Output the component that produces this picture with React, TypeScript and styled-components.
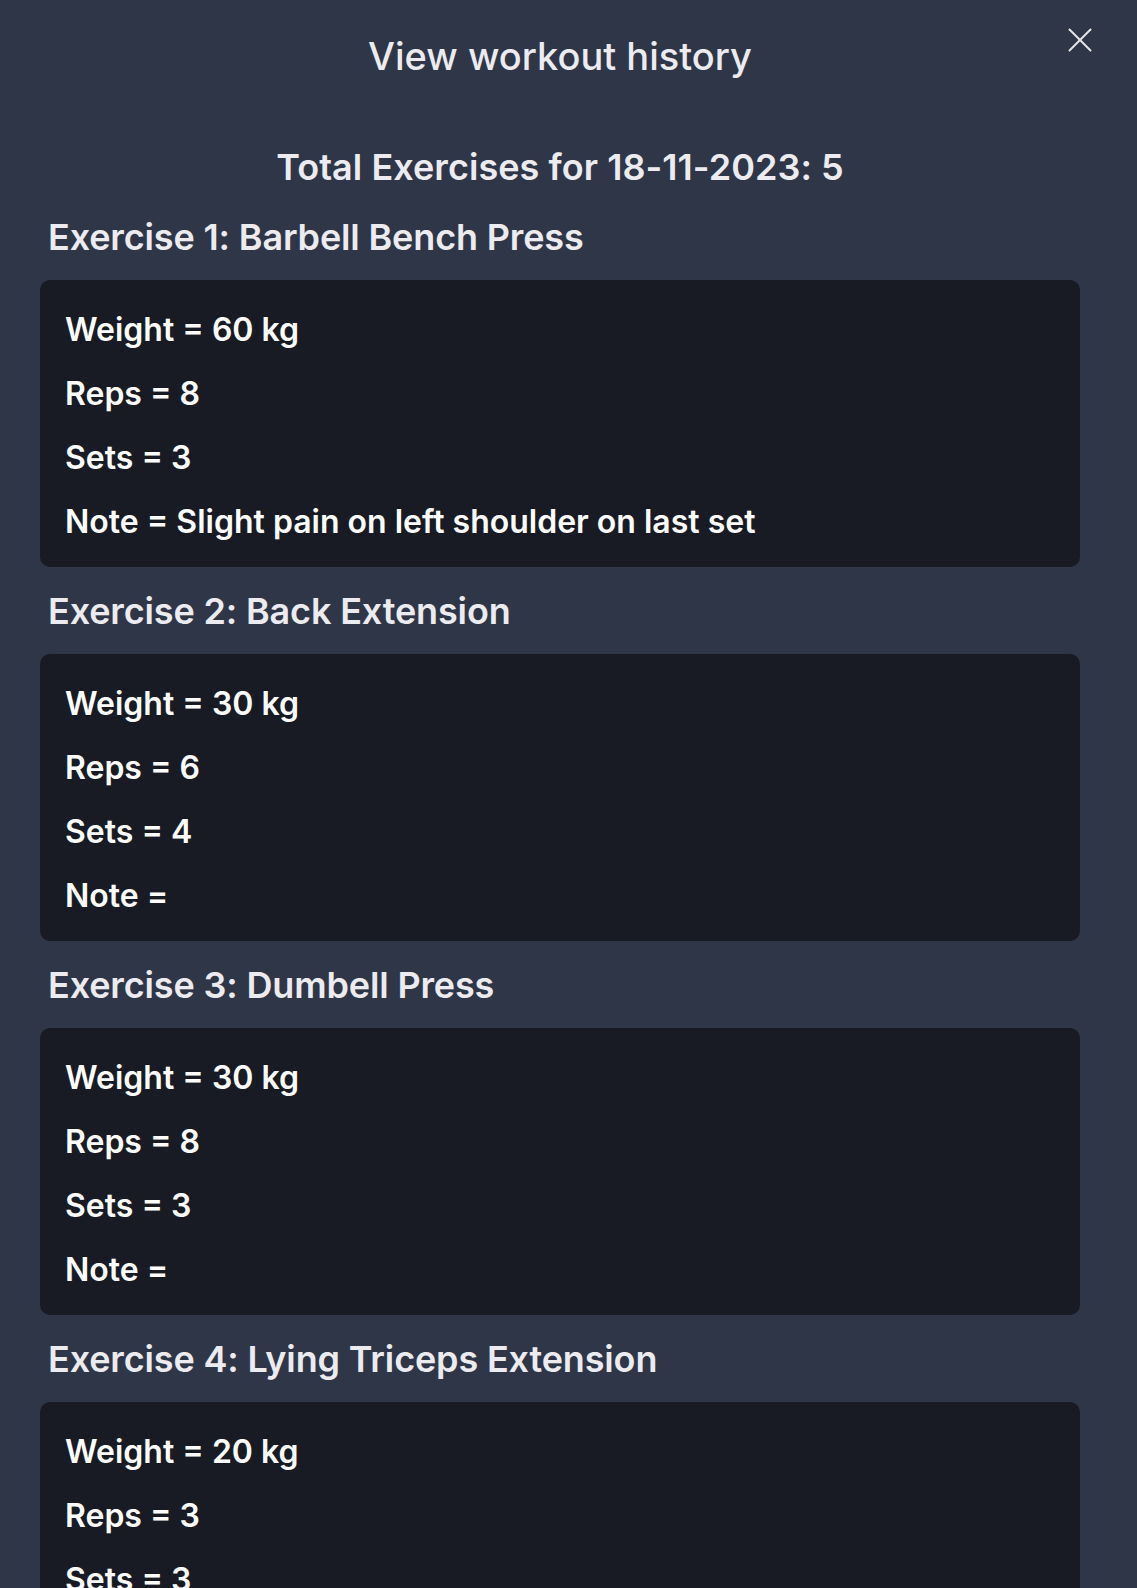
import React from "react";
import styled, { createGlobalStyle } from "styled-components";

const GlobalStyle = createGlobalStyle`
  html, body {
    margin: 0;
    padding: 0;
    background: #2e3648;
  }
  body {
    font-family: Inter, "Noto Sans", "Liberation Sans", sans-serif;
    -webkit-font-smoothing: antialiased;
  }
  * { box-sizing: border-box; }
`;

const Page = styled.div`
  position: relative;
  min-height: 1588px;
  padding: 0 57px 40px 40px;
  display: flex;
  flex-direction: column;
`;

const Header = styled.header`
  padding-top: 36px;
  display: flex;
  justify-content: center;
`;

const Title = styled.h1`
  margin: 0;
  font-size: 38px;
  line-height: 40px;
  font-weight: 500;
  color: #ececf0;
  letter-spacing: 0;
`;

const CloseButton = styled.button`
  position: absolute;
  top: 28px;
  right: 45px;
  width: 24px;
  height: 24px;
  padding: 0;
  border: none;
  background: transparent;
  cursor: pointer;
  color: #e6e6ea;
  display: flex;
  align-items: center;
  justify-content: center;
`;

const Total = styled.h2`
  margin: 71px 0 6px;
  text-align: center;
  font-size: 36px;
  line-height: 40px;
  font-weight: 600;
  color: #ececf0;
  letter-spacing: 0.05px;
`;

const Section = styled.section`
  display: flex;
  flex-direction: column;
`;

const ExerciseTitle = styled.h3`
  margin: 24px 0 23px;
  padding-left: 8px;
  font-size: 36px;
  line-height: 40px;
  font-weight: 600;
  color: #ececf0;
  letter-spacing: -0.15px;
`;

const Card = styled.div`
  background: #181b24;
  border-radius: 10px;
  padding: 18px 25px 13px;
  display: flex;
  flex-direction: column;
`;

const Row = styled.p`
  margin: 0;
  font-size: 32px;
  line-height: 64px;
  font-weight: 600;
  color: #ffffff;
  letter-spacing: 0;
  white-space: nowrap;
`;

type Exercise = {
  name: string;
  weight: number;
  reps: number;
  sets: number;
  note: string;
};

const exercises: Exercise[] = [
  { name: "Barbell Bench Press", weight: 60, reps: 8, sets: 3, note: "Slight pain on left shoulder on last set" },
  { name: "Back Extension", weight: 30, reps: 6, sets: 4, note: "" },
  { name: "Dumbell Press", weight: 30, reps: 8, sets: 3, note: "" },
  { name: "Lying Triceps Extension", weight: 20, reps: 3, sets: 3, note: "" },
];

const CloseIcon = () => (
  <svg width="24" height="24" viewBox="0 0 24 24" fill="none" stroke="currentColor" strokeWidth="2" strokeLinecap="round">
    <path d="M1.5 1.5 L22.5 22.5" />
    <path d="M22.5 1.5 L1.5 22.5" />
  </svg>
);

export default function App() {
  return (
    <>
      <GlobalStyle />
      <Page>
        <Header>
          <Title>View workout history</Title>
        </Header>
        <CloseButton aria-label="Close">
          <CloseIcon />
        </CloseButton>
        <Total>Total Exercises for 18-11-2023: 5</Total>
        {exercises.map((ex, i) => (
          <Section key={ex.name}>
            <ExerciseTitle>
              Exercise {i + 1}: {ex.name}
            </ExerciseTitle>
            <Card>
              <Row>Weight = {ex.weight} kg</Row>
              <Row>Reps = {ex.reps}</Row>
              <Row>Sets = {ex.sets}</Row>
              <Row>Note = {ex.note}</Row>
            </Card>
          </Section>
        ))}
      </Page>
    </>
  );
}
